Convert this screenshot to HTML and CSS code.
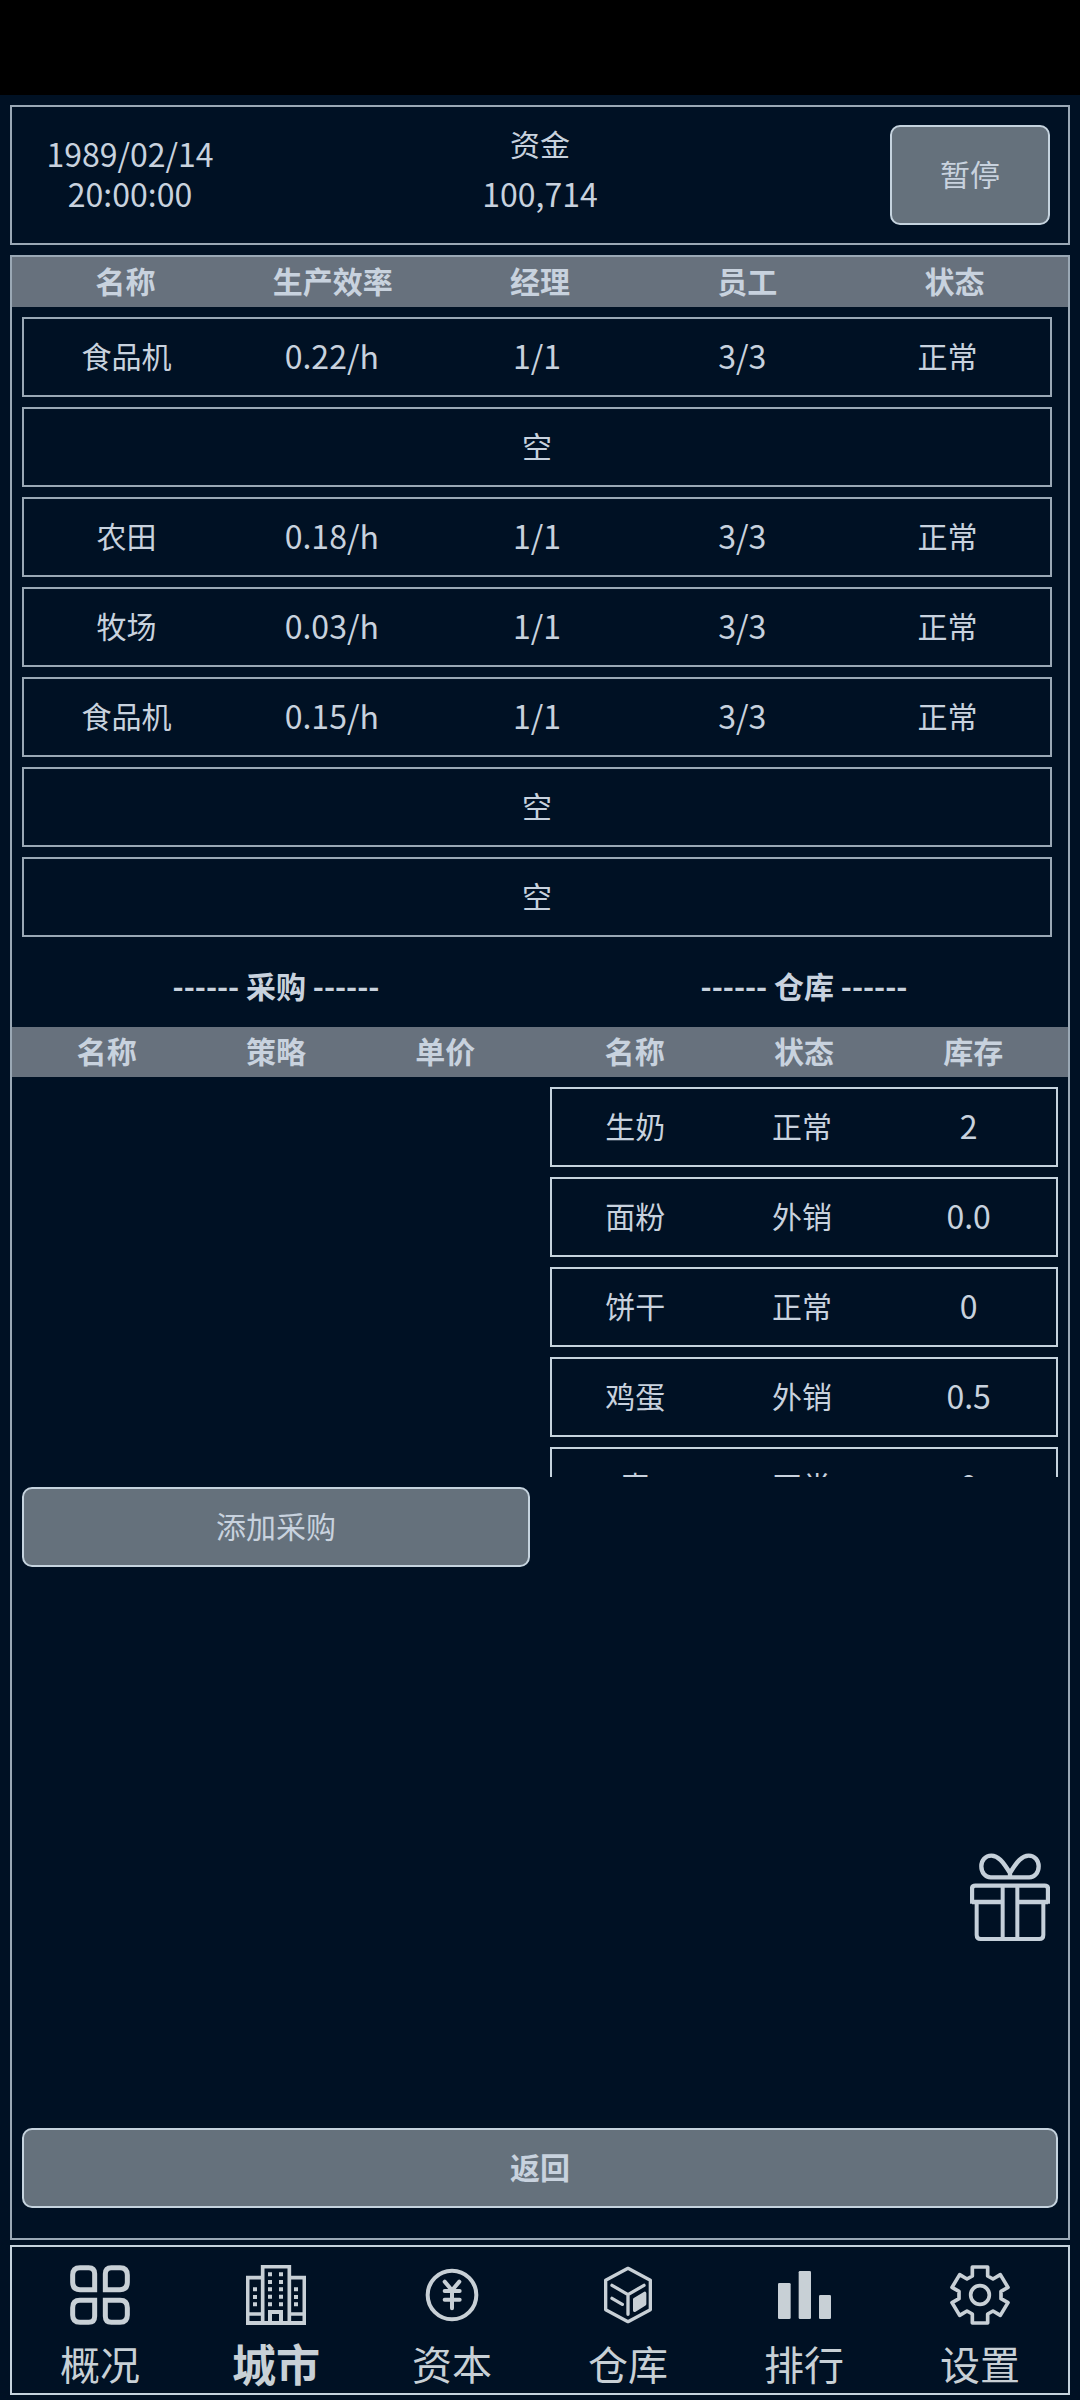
FILE: index.html
```html
<!DOCTYPE html>
<html lang="zh-CN">

<head>
  <meta charset="UTF-8">
  <meta name="viewport" content="width=device-width, initial-scale=1.0">
  <title>城市</title>
  <link rel="stylesheet" href="styles.css">
</head>

<body>
  <div class="status-bar"></div>

  <header class="top-bar">
    <div class="clock">
      <span>1989/02/14</span>
      <span>20:00:00</span>
    </div>
    <div class="funds">
      <span class="funds-label">资金</span>
      <span>100,714</span>
    </div>
    <button class="btn pause" type="button">暂停</button>
  </header>

  <main class="panel">
    <table class="grid facilities">
      <thead>
        <tr><th>名称</th><th>生产效率</th><th>经理</th><th>员工</th><th>状态</th></tr>
      </thead>
      <tbody>
        <tr><td>食品机</td><td class="num">0.22/h</td><td class="num">1/1</td><td class="num">3/3</td><td>正常</td></tr>
        <tr><td class="empty" colspan="5">空</td></tr>
        <tr><td>农田</td><td class="num">0.18/h</td><td class="num">1/1</td><td class="num">3/3</td><td>正常</td></tr>
        <tr><td>牧场</td><td class="num">0.03/h</td><td class="num">1/1</td><td class="num">3/3</td><td>正常</td></tr>
        <tr><td>食品机</td><td class="num">0.15/h</td><td class="num">1/1</td><td class="num">3/3</td><td>正常</td></tr>
        <tr><td class="empty" colspan="5">空</td></tr>
        <tr><td class="empty" colspan="5">空</td></tr>
      </tbody>
    </table>

    <div class="columns">
      <section>
        <h2>------ 采购 ------</h2>
        <table class="grid purchases">
          <thead>
            <tr><th>名称</th><th>策略</th><th>单价</th></tr>
          </thead>
          <tbody></tbody>
        </table>
        <button class="btn add" type="button">添加采购</button>
      </section>
      <section>
        <h2>------ 仓库 ------</h2>
        <table class="grid stock">
          <thead>
            <tr><th>名称</th><th>状态</th><th>库存</th></tr>
          </thead>
          <tbody>
            <tr><td>生奶</td><td>正常</td><td class="num">2</td></tr>
            <tr><td>面粉</td><td>外销</td><td class="num">0.0</td></tr>
            <tr><td>饼干</td><td>正常</td><td class="num">0</td></tr>
            <tr><td>鸡蛋</td><td>外销</td><td class="num">0.5</td></tr>
            <tr><td>麦</td><td>正常</td><td class="num">0</td></tr>
          </tbody>
        </table>
      </section>
    </div>

    <button class="gift" type="button" aria-label="礼物">
      <svg viewBox="0 0 240 264" fill="none" stroke="currentColor" stroke-width="13" stroke-linejoin="round">
        <path d="M120 60C98 24 84 8 64 8C46 8 34 22 34 40C34 59 46 73 62 73H178C194 73 206 59 206 40C206 22 194 8 176 8C156 8 142 24 120 60V73" />
        <path d="M6 152V108Q6 98 16 98H224Q234 98 234 108V152M6 147H98M142 147H234" />
        <path d="M20 147V246Q20 258 32 258H208Q220 258 220 246V147M98 98V258M142 98V258" stroke-width="12" />
      </svg>
    </button>

    <button class="btn back" type="button">返回</button>
  </main>

  <nav class="tabs">
    <a href="#">
      <svg viewBox="0 0 180 180" fill="none" stroke="currentColor" stroke-width="15">
        <path d="M30 8H56Q74 8 74 26V74H30Q8 74 8 52V30Q8 8 30 8Z" />
        <path d="M124 8H150Q172 8 172 30V52Q172 74 150 74H106V26Q106 8 124 8Z" />
        <path d="M30 106H74V154Q74 172 56 172H30Q8 172 8 150V128Q8 106 30 106Z" />
        <path d="M106 106H150Q172 106 172 128V150Q172 172 150 172H124Q106 172 106 154Z" />
      </svg>
      概况
    </a>
    <a class="active" href="#">
      <svg viewBox="0 0 180 180" fill="none" stroke="currentColor" stroke-width="11">
        <path d="M50 175V5H130V175M50 38H5V175M130 38H175V175M5 147H50M130 147H175" />
        <path d="M0 174H180M72 174V141H105V174" stroke-width="12" />
        <g fill="currentColor" stroke="none">
          <path d="M66 22h12v12h-12zM66 45h12v12h-12zM66 67h12v12h-12zM66 89h12v12h-12zM66 112h12v12h-12z" />
          <path d="M99 22h12v12h-12zM99 45h12v12h-12zM99 67h12v12h-12zM99 89h12v12h-12zM99 112h12v12h-12z" />
          <path d="M21 67h12v12h-12zM21 90h12v12h-12zM21 112h12v12h-12z" />
          <path d="M144 67h12v12h-12zM144 90h12v12h-12zM144 112h12v12h-12z" />
        </g>
      </svg>
      城市
    </a>
    <a href="#">
      <svg viewBox="0 0 180 180" fill="none" stroke="currentColor" stroke-width="12" stroke-linecap="round">
        <circle cx="90" cy="90" r="73" />
        <path d="M68 50L90 76L112 50M68 78H113M68 104H113M90 76V130" stroke-width="12" />
      </svg>
      资本
    </a>
    <a href="#">
      <svg viewBox="0 0 180 180" fill="none" stroke="currentColor" stroke-width="10" stroke-linecap="round" stroke-linejoin="round">
        <path d="M90 10L157 46V134L90 170L23 134V46Z" />
        <path d="M42 61L90 89L138 61M90 89V148M42 100L73 118" />
        <path d="M110 103L140 85V117L110 136Z" fill="currentColor" />
      </svg>
      仓库
    </a>
    <a href="#">
      <svg viewBox="0 0 180 180" fill="currentColor">
        <rect x="12" y="54" width="38" height="108" rx="4" />
        <rect x="74" y="18" width="37" height="144" rx="4" />
        <rect x="135" y="90" width="36" height="72" rx="4" />
      </svg>
      排行
    </a>
    <a href="#">
      <svg viewBox="0 0 180 180" fill="none" stroke="currentColor" stroke-width="11" stroke-linejoin="round">
        <path d="M67 6H113V33L129 42L151 29L174 67L153 79V101L174 113L151 151L129 138L113 147V174H67V147L51 138L29 151L6 113L27 101V79L6 67L29 29L51 42L67 33Z" />
        <circle cx="90" cy="90" r="28" />
      </svg>
      设置
    </a>
  </nav>
</body>

</html>
```

FILE: styles.css
```css
* {
  box-sizing: border-box;
}

body {
  margin: 0;
  min-height: 100vh;
  display: flex;
  flex-direction: column;
  background: #001124;
  color: #c8d2de;
  font-family: "Noto Sans CJK SC", sans-serif;
  font-size: 30px;
  line-height: 40px;
}

.status-bar {
  height: 95px;
  background: #000000;
}

.top-bar {
  display: grid;
  grid-template-columns: 200px 1fr 200px;
  align-items: center;
  height: 140px;
  margin: 10px 10px 0;
  padding: 0 18px;
  border: 2px solid #9aa8b5;
  text-align: center;
  font-size: 32px;
}

.clock,
.funds {
  display: flex;
  flex-direction: column;
}

.clock {
  padding-bottom: 4px;
}

.funds {
  padding-bottom: 14px;
  line-height: 50px;
}

.funds-label {
  font-size: 30px;
}

.btn {
  height: 80px;
  padding: 0 0 4px;
  border: 2px solid #c5d3de;
  border-radius: 10px;
  background: #65717c;
  color: inherit;
  font: inherit;
  font-size: 30px;
  cursor: pointer;
}

.pause {
  width: 160px;
  height: 100px;
  justify-self: end;
}

.panel {
  position: relative;
  flex: 1;
  display: flex;
  flex-direction: column;
  margin: 10px 10px 0;
  border: 2px solid #9aa8b5;
}

/* tables */
.grid,
.grid thead,
.grid tbody {
  display: block;
}

.grid thead {
  padding: 0 10px;
  background: #67717d;
}

.grid tr {
  display: flex;
  align-items: center;
}

.grid th,
.grid td {
  flex: 1;
  padding: 0 0 4px;
  text-align: center;
}

.grid th {
  line-height: 46px;
  font-weight: 700;
}

.grid tbody tr {
  height: 80px;
  margin: 10px 10px 0;
  border: 2px solid #c5d3de;
}

.grid .num {
  font-size: 32px;
}

.facilities tbody tr {
  margin-right: 16px;
  border-color: #9aa8b5;
}

.stock tbody tr {
  padding-right: 4px;
}

.columns {
  display: grid;
  grid-template-columns: 1fr 1fr;
}

h2 {
  margin: 0;
  padding: 28px 0 22px;
  font-size: 30px;
  font-weight: 700;
  text-align: center;
}

.purchases tbody,
.stock tbody {
  height: 400px;
  overflow-y: auto;
  scrollbar-width: none;
}

.add {
  display: block;
  width: calc(100% - 20px);
  margin: 10px;
}

.gift {
  position: absolute;
  right: 18px;
  bottom: 297px;
  width: 80px;
  padding: 0;
  border: none;
  background: none;
  color: #c5d0da;
  cursor: pointer;
}

.gift svg {
  display: block;
  width: 100%;
}

.back {
  margin: auto 10px 30px;
  font-weight: 700;
}

/* bottom navigation */
.tabs {
  display: flex;
  margin: 5px 10px;
  border: 2px solid #c5d3de;
}

.tabs a {
  flex: 1;
  display: flex;
  flex-direction: column;
  align-items: center;
  gap: 8px;
  padding-top: 18px;
  color: #c8d0d6;
  font-size: 40px;
  line-height: 60px;
  text-decoration: none;
}

.tabs .active {
  font-size: 44px;
  font-weight: 700;
}

.tabs svg {
  width: 60px;
  height: 60px;
}
```
